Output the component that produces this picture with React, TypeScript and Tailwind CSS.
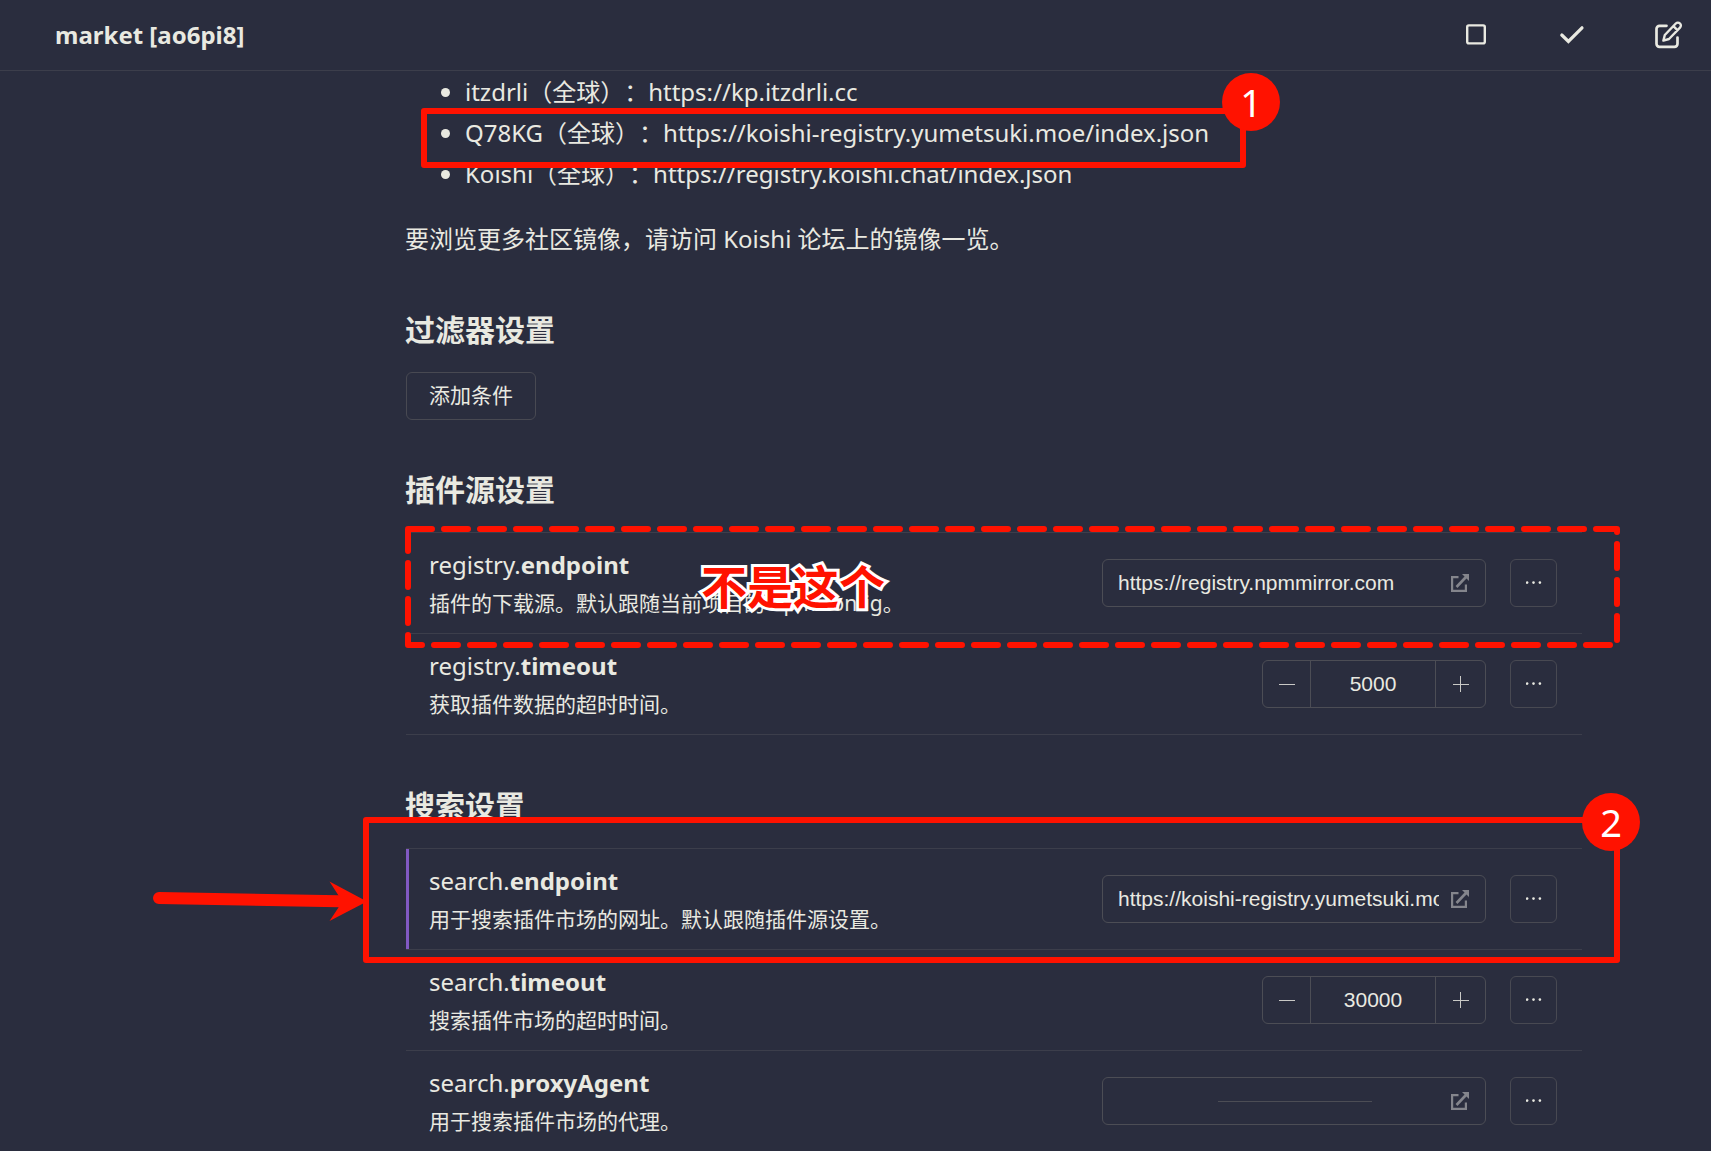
import { useState } from "react";
import type { ReactNode } from "react";

function SquareIcon() {
  return (
    <svg className="size-8" viewBox="0 0 32 32" fill="none" stroke="currentColor" strokeWidth="2.4" aria-hidden="true">
      <rect x="7.2" y="6.4" width="17.6" height="18" rx="1.6" />
    </svg>
  );
}

function CheckIcon() {
  return (
    <svg className="size-8" viewBox="0 0 32 32" fill="none" stroke="currentColor" strokeWidth="3.2" strokeLinecap="round" strokeLinejoin="miter" aria-hidden="true">
      <path d="M5.8 16 L12.4 22.4 L26 8.8" />
    </svg>
  );
}

function EditIcon() {
  return (
    <svg className="size-8" viewBox="0 0 32 32" fill="none" stroke="currentColor" strokeWidth="2.7" strokeLinecap="round" strokeLinejoin="round" aria-hidden="true">
      <path d="M14.5 6.8H7.5a3 3 0 0 0-3 3V24.8a3 3 0 0 0 3 3H22.5a3 3 0 0 0 3-3V18.6" />
      <path d="M11.4 21.6 L12.8 16 L23.8 4.5 a2.9 2.9 0 0 1 4.2 4.2 L17 20 Z M21.4 7.2 l4 4" strokeWidth="2.4" />
    </svg>
  );
}

function ExternalIcon() {
  return (
    <svg className="size-[18px] shrink-0 text-[#84858c]" viewBox="0 0 18 18" fill="none" stroke="currentColor" strokeWidth="2.2" aria-hidden="true">
      <path d="M7.5 3.1H1.1v13.8h13.8v-6.4" />
      <path d="M5.5 13 L15 3" strokeWidth="2.6" />
      <path d="M11 0h7v7z" fill="currentColor" stroke="none" />
    </svg>
  );
}

function MoreButton({ name }: { name: string }) {
  return (
    <button type="button" aria-label={`${name} options`} className="flex h-12 w-[47px] shrink-0 items-center justify-center rounded-md border border-[#484952]">
      <svg className="h-1 w-4" viewBox="0 0 16 4" fill="currentColor" aria-hidden="true">
        <circle cx="1.1" cy="1.6" r="1.3" />
        <circle cx="7.5" cy="1.6" r="1.3" />
        <circle cx="13.9" cy="1.6" r="1.3" />
      </svg>
    </button>
  );
}

function UrlField({ id, initial, empty }: { id: string; initial: string; empty?: boolean }) {
  const [value, setValue] = useState(initial);
  return (
    <div className="relative flex h-12 w-96 items-center gap-3 rounded-md border border-[#4c4d55] pr-4 pl-[15px]">
      <input
        id={id}
        type="text"
        value={value}
        onChange={(e) => setValue(e.target.value)}
        className="h-full min-w-0 flex-1 bg-transparent font-['Liberation_Sans',sans-serif] text-[21px] outline-none"
      />
      <ExternalIcon />
      {empty && value === "" && <span className="pointer-events-none absolute left-[115px] h-px w-[154px] bg-[#4c4d55]" />}
    </div>
  );
}

function NumberField({ id, initial }: { id: string; initial: number }) {
  const [value, setValue] = useState(initial);
  return (
    <div className="flex h-12 w-56 items-center rounded-md border border-[#4c4d55]">
      <button type="button" aria-label="Decrease" onClick={() => setValue(value - 1)} className="flex h-full w-12 items-center justify-center border-r border-[#4c4d55]">
        <svg className="size-4" viewBox="0 0 16 16" stroke="#c9c9c6" aria-hidden="true">
          <path d="M0 8.5h16" />
        </svg>
      </button>
      <input
        id={id}
        type="text"
        inputMode="numeric"
        value={value}
        onChange={(e) => setValue(Number(e.target.value) || 0)}
        className="h-full min-w-0 flex-1 bg-transparent text-center font-['Liberation_Sans',sans-serif] text-[21px] outline-none"
      />
      <button type="button" aria-label="Increase" onClick={() => setValue(value + 1)} className="flex h-full w-[50px] items-center justify-center border-l border-[#4c4d55]">
        <svg className="size-4" viewBox="0 0 16 16" stroke="#c9c9c6" aria-hidden="true">
          <path d="M0 8.5h16M7.5 0v16" />
        </svg>
      </button>
    </div>
  );
}

type RowProps = {
  group: string;
  name: string;
  desc: string;
  active?: boolean;
  control: ReactNode;
  children?: ReactNode;
};

function Row({ group, name, desc, active, control, children }: RowProps) {
  const id = `${group}-${name}`;
  return (
    <div className="relative flex h-[101px] items-center justify-between border-b border-[#3c3e4b] pr-[25px] pl-[23px]">
      {active && <span className="absolute inset-y-0 left-0 w-[3px] bg-[#8159c3]" />}
      <div>
        <label htmlFor={id} className="block h-10 text-[24px] leading-10">
          {group}.<b className="font-bold">{name}</b>
        </label>
        <p className="h-9 text-[21px] leading-9">{desc}</p>
      </div>
      <div className="flex items-center gap-6">
        {control}
        <MoreButton name={id} />
      </div>
      {children}
    </div>
  );
}

function Heading({ children }: { children: ReactNode }) {
  return <h2 className="mb-[22px] text-[30px] leading-10 font-bold">{children}</h2>;
}

function Badge({ className, children }: { className: string; children: ReactNode }) {
  return (
    <span className={`absolute flex size-[58px] items-center justify-center rounded-full bg-[#ff1200] text-[38px] leading-none text-white ${className}`}>
      {children}
    </span>
  );
}

export default function App() {
  return (
    <div className="flex h-screen flex-col overflow-hidden bg-[#2a2d3e] font-['Noto_Sans','Noto_Sans_CJK_SC',sans-serif] text-[#e9e9e1] [text-spacing-trim:space-all]">
      <header className="flex h-[71px] shrink-0 items-center justify-between border-b border-[#3c3e4b] pr-[19px] pl-[55px]">
        <h1 className="text-[24px] leading-10 font-bold">market [ao6pi8]</h1>
        <div className="flex gap-12">
          <button type="button" aria-label="Stop" className="flex size-12 items-center justify-center"><SquareIcon /></button>
          <button type="button" aria-label="Save" className="flex size-12 items-center justify-center"><CheckIcon /></button>
          <button type="button" aria-label="Edit" className="flex size-12 items-center justify-center"><EditIcon /></button>
        </div>
      </header>

      <main className="min-h-0 flex-1 overflow-hidden pr-[129px] pl-[405px]">
        <ul className="list-disc pl-[60px] text-[24px] leading-[41px]">
          <li className="h-[41px]">itzdrli（全球）：https://kp.itzdrli.cc</li>
          <li className="h-[41px]">Q78KG（全球）：https://koishi-registry.yumetsuki.moe/index.json</li>
          <li className="relative h-[41px]">
            Koishi（全球）：https://registry.koishi.chat/index.json
            <span className="absolute -top-[45px] -left-[44px] h-[60px] w-[825px] rounded-[3px] border-[6px] border-[#ff1200]">
              <Badge className="-top-[41px] -right-[40px]">1</Badge>
            </span>
          </li>
        </ul>
        <p className="mt-6 text-[24px] leading-[42px]">要浏览更多社区镜像，请访问 Koishi 论坛上的镜像一览。</p>

        <section className="mt-[50px]">
          <Heading>过滤器设置</Heading>
          <button type="button" className="ml-px block h-12 rounded-md border border-[#484952] px-[22px] text-[21px]">添加条件</button>
        </section>

        <section className="mt-[50px]">
          <Heading>插件源设置</Heading>
          <div className="ml-px border-t border-[#3c3e4b] pb-px">
            <Row group="registry" name="endpoint" desc="插件的下载源。默认跟随当前项目的 npm config。" control={<UrlField id="registry-endpoint" initial="https://registry.npmmirror.com" />}>
              <svg className="pointer-events-none absolute -top-[7px] -left-px h-[122px] w-[1215px]" viewBox="0 0 1215 122" fill="none" aria-hidden="true">
                <path d="M3 3H1212V119H3Z" stroke="#ff1200" strokeWidth="6" strokeLinecap="round" strokeLinejoin="round" strokeDasharray="24 12" />
              </svg>
              <strong className="pointer-events-none absolute top-[21px] left-[295px] text-[46px] leading-[64px] font-bold text-[#ff1200] [-webkit-text-stroke:6px_white] [paint-order:stroke_fill]">
                不是这个
              </strong>
            </Row>
            <Row group="registry" name="timeout" desc="获取插件数据的超时时间。" control={<NumberField id="registry-timeout" initial={5000} />} />
          </div>
        </section>

        <section className="mt-[50px]">
          <Heading>搜索设置</Heading>
          <div className="ml-px border-t border-[#3c3e4b]">
            <Row active group="search" name="endpoint" desc="用于搜索插件市场的网址。默认跟随插件源设置。" control={<UrlField id="search-endpoint" initial="https://koishi-registry.yumetsuki.moe/index.json" />}>
              <div className="pointer-events-none absolute -top-8 -right-[38px] -left-[43px] h-[146px] rounded-[3px] border-[6px] border-[#ff1200]">
                <svg className="absolute top-[56px] -left-[220px] h-12 w-[224px]" viewBox="0 0 224 48" fill="#ff1200" aria-hidden="true">
                  <path d="M10 19 L190 22.3" stroke="#ff1200" strokeWidth="12" strokeLinecap="round" />
                  <path d="M180.5 2.5 L218 22.5 L180.5 42 L189.5 28.5 V16.5 Z" />
                </svg>
                <Badge className="-top-[30px] -right-[26px]">2</Badge>
              </div>
            </Row>
            <Row group="search" name="timeout" desc="搜索插件市场的超时时间。" control={<NumberField id="search-timeout" initial={30000} />} />
            <Row group="search" name="proxyAgent" desc="用于搜索插件市场的代理。" control={<UrlField id="search-proxyAgent" initial="" empty />} />
          </div>
        </section>
      </main>
    </div>
  );
}
